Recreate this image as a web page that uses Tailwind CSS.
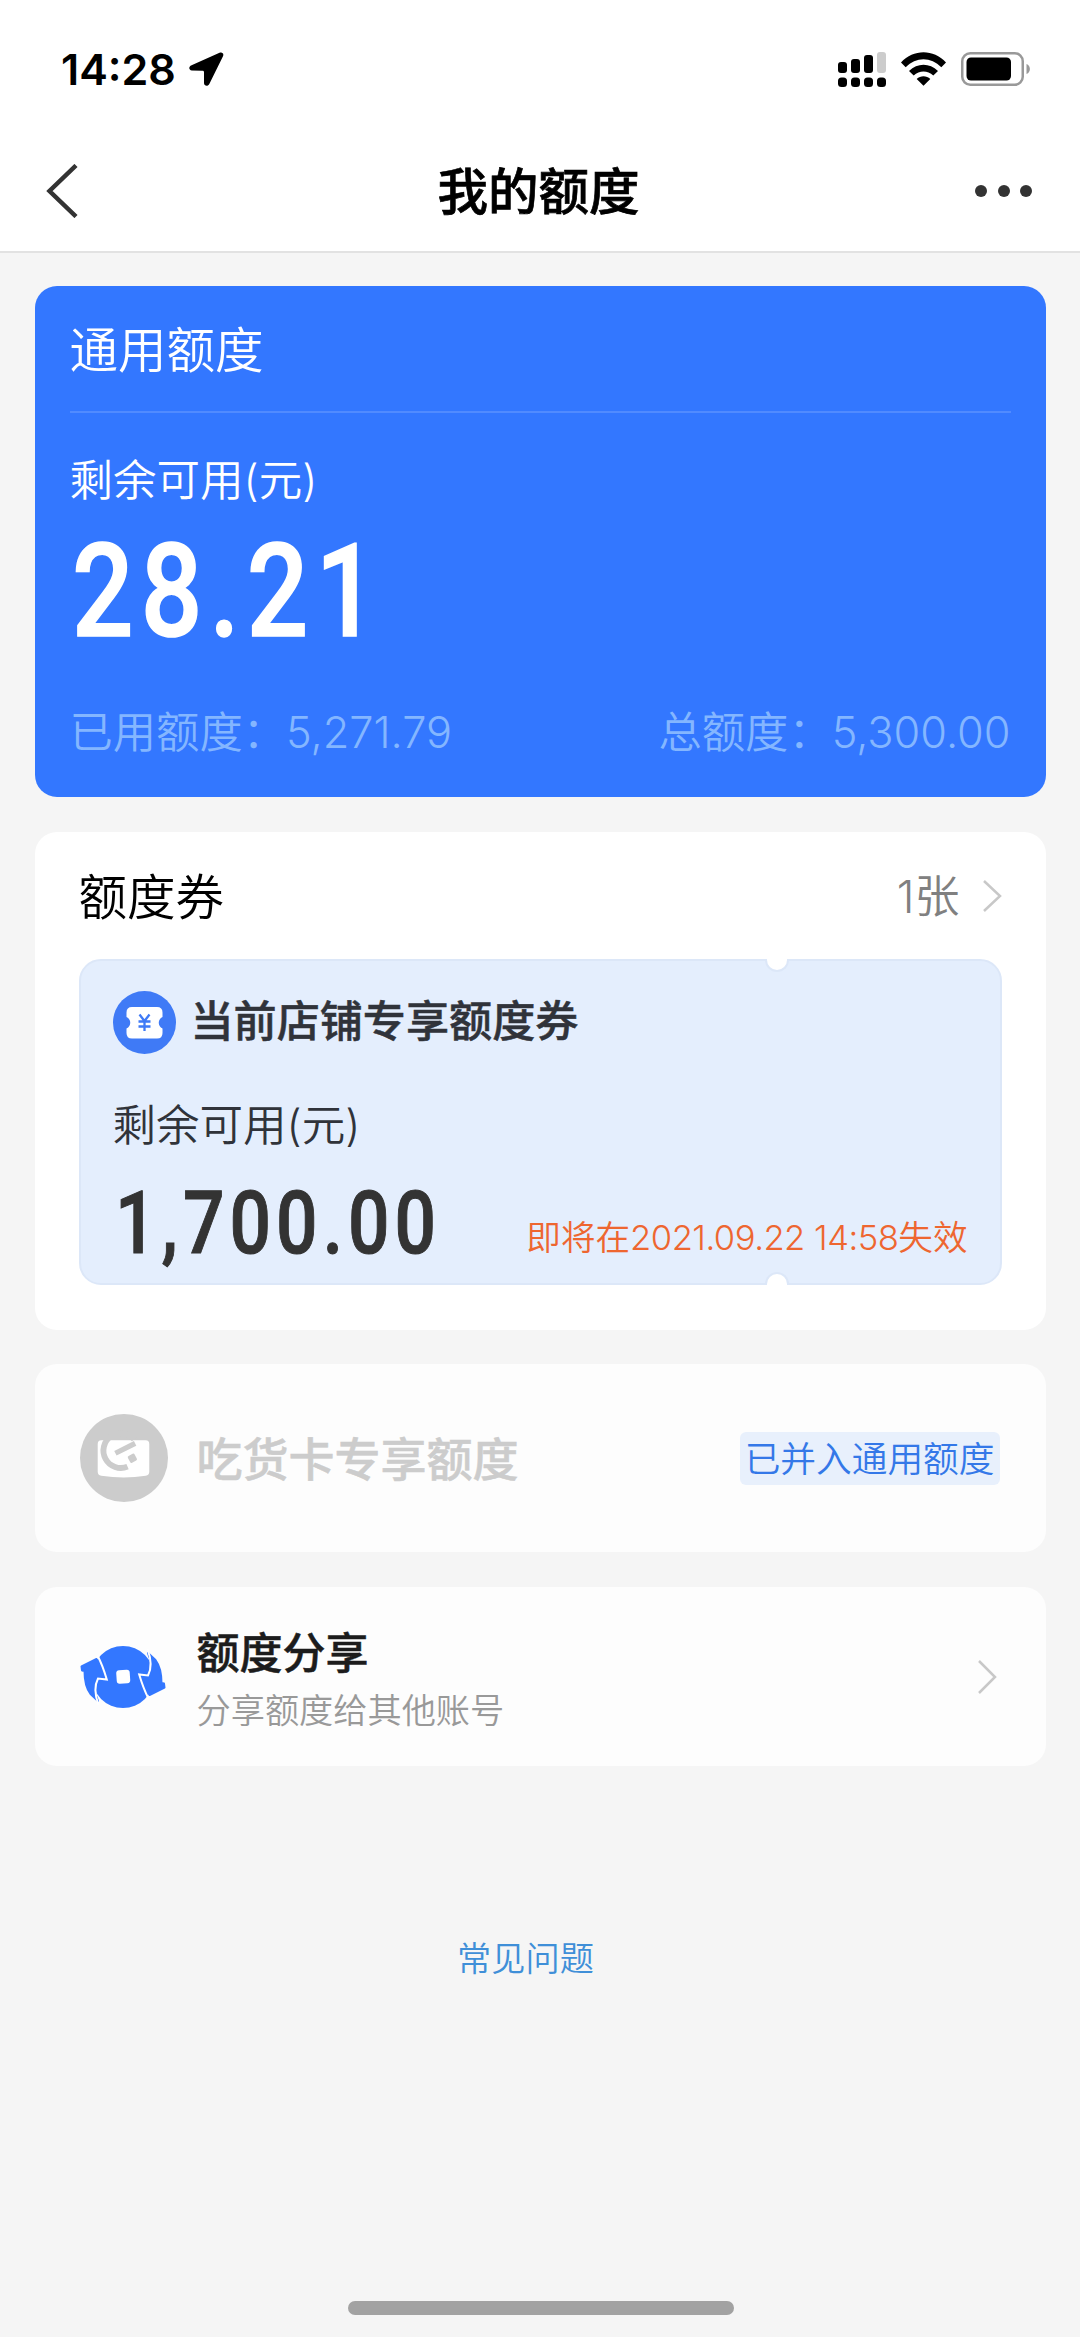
<!DOCTYPE html>
<html lang="zh-CN">
<head>
<meta charset="utf-8">
<title>我的额度</title>
<script src="https://cdn.jsdelivr.net/npm/@tailwindcss/browser@4"></script>
</head>
<body class="bg-[#f5f5f5]">
<div class="flex h-[2337px] w-[1080px] flex-col overflow-hidden bg-[#f5f5f5] font-['Inter','Noto_Sans_CJK_SC',sans-serif] font-[350] whitespace-nowrap">

  <!-- status bar and title bar -->
  <header class="h-[253px] shrink-0 border-b-2 border-[#e2e2e2] bg-white">
    <div class="flex h-[138px] items-center justify-between pr-[49px] pl-[61px]">
      <div class="flex items-center gap-[13px]">
        <span class="text-[43px] leading-[60px] font-semibold text-black">14:28</span>
        <svg class="h-[34px] w-[35px]" viewBox="0 0 35 34"><path d="M30.500 0.800 2 13.500C-.5 14.800-.3 18.300 2.800 18.500L13.500 18.700C14.500 18.700 15 19.200 15 20.200V31C15 34.200 19 34.700 20.300 32L34 4.200C35.200 1.500 33-.4 30.500.8Z" fill="#000"/></svg>
      </div>
      <div class="flex items-center gap-[15px]">
        <svg class="h-[36px] w-[48px]" viewBox="0 0 48 36">
          <g fill="#000">
            <rect x="0" y="11" width="9" height="11" rx="3"/><rect x="13" y="8" width="9" height="14" rx="3"/><rect x="26" y="4" width="9" height="18" rx="3"/>
            <rect x="0" y="26.500" width="9" height="9.500" rx="3.500"/><rect x="13" y="26.500" width="9" height="9.500" rx="3.500"/><rect x="26" y="26.500" width="9" height="9.500" rx="3.500"/><rect x="39" y="26.500" width="9" height="9.500" rx="3.500"/>
          </g>
          <rect x="39" y="1" width="9" height="21" rx="3" fill="#ccc"/>
        </svg>
        <svg class="h-[34px] w-[45px]" viewBox="0 0 45 34">
          <path d="M0 10.500C12.500-3.200 32.500-3.200 45 10.500L40.300 15.200C30 4.500 15 4.500 4.700 15.200ZM8 19C16.500 10.500 28.500 10.500 37 19L32.300 23.500C26.500 18.300 18.500 18.300 12.700 23.500ZM15.700 27C19.500 23.300 25.500 23.300 29.300 27L22.500 33.800Z" fill="#000"/>
        </svg>
        <svg class="h-[34px] w-[70px]" viewBox="0 0 70 34">
          <rect x="1.250" y="1.250" width="60.500" height="31.500" rx="8" fill="none" stroke="#999" stroke-width="2.500"/>
          <rect x="5.500" y="5.500" width="44.500" height="23" rx="4.500" fill="#000"/>
          <path d="M65.500 12V22C70 20.500 70 13.500 65.500 12Z" fill="#999"/>
        </svg>
      </div>
    </div>
    <div class="flex h-[106px] items-center justify-between pr-[48px] pl-[46px]">
      <svg class="h-[54px] w-[56px]" viewBox="0 0 56 54"><path d="M30 1.500 3.500 27 30 52.500" fill="none" stroke="#333" stroke-width="4.500"/></svg>
      <h1 class="pt-px text-[50.500px] leading-[80px] font-medium text-black [-webkit-text-stroke:0.700px_#000]">我的额度</h1>
      <div class="flex gap-[10.500px]">
        <span class="size-3 rounded-full bg-[#333]"></span><span class="size-3 rounded-full bg-[#333]"></span><span class="size-3 rounded-full bg-[#333]"></span>
      </div>
    </div>
  </header>

  <main class="flex flex-col px-[34.500px] pt-[33px]">
    <!-- general quota -->
    <section class="h-[511px] rounded-[22px] bg-[#3377ff] px-[35px] text-white">
      <h2 class="flex h-[127px] items-center border-b-2 border-white/15 pt-[6px] text-[48.500px]">通用额度</h2>
      <p class="mt-[37px] text-[43.500px] leading-[60px]">剩余可用(元)</p>
      <p class="mt-[27px] ml-[2px] h-[110px] origin-left scale-x-[.84] font-['Roboto'] text-[129px] leading-[110px] font-medium tracking-[8.500px] [-webkit-text-stroke:1.500px_#fff]">28.21</p>
      <div class="mt-[55px] flex justify-between text-[43.300px] leading-[60px] text-[#84b6ff]">
        <span>已用额度：5,271.79</span><span>总额度：5,300.00</span>
      </div>
    </section>

    <!-- quota coupons -->
    <section class="mt-[35px] h-[498px] rounded-[22px] bg-white px-[44px]">
      <div class="flex h-[127px] items-center justify-between">
        <h2 class="pt-[5px] text-[48.500px] text-black">额度券</h2>
        <div class="flex items-center gap-[22px] text-[45px] text-[#808080]"><span class="pt-[3px]">1张</span>
          <svg class="h-[34px] w-[20px]" viewBox="0 0 20 34"><path d="M2 2 18 17 2 32" fill="none" stroke="#c8c8c8" stroke-width="2.500"/></svg>
        </div>
      </div>
      <div class="relative h-[326px] rounded-[22px] border-2 border-[#dce7f8] bg-[#e4eefd] px-[32px]">
        <span class="absolute -top-[2px] left-[684px] h-[13px] w-[24px] rounded-b-full border-2 border-t-0 border-[#dce7f8] bg-white"></span>
        <span class="absolute -bottom-[2px] left-[684px] h-[13px] w-[24px] rounded-t-full border-2 border-b-0 border-[#dce7f8] bg-white"></span>
        <div class="mt-[30px] flex h-[63px] items-center gap-[15px]">
          <svg class="size-[63px]" viewBox="0 0 63 63">
            <circle cx="31.500" cy="31.500" r="31.500" fill="#3f7af6"/>
            <path d="M19 16H44Q49.500 16 49.500 21.500V26C44.500 28.500 44.500 35 49.500 37.500V42Q49.500 47.500 44 47.500H19Q13.500 47.500 13.500 42V37.500C18.500 35 18.500 28.500 13.500 26V21.500Q13.500 16 19 16Z" fill="#fff"/>
            <path d="M26.500 23.500 31.500 30 36.500 23.500M31.500 30V40M25.500 30.500H37.500M25.500 35.500H37.500" fill="none" stroke="#3f7af6" stroke-width="2.300"/>
          </svg>
          <h3 class="-mt-[4px] text-[43.100px] leading-[60px] font-medium text-[#30333a] [-webkit-text-stroke:0.500px_#30333a]">当前店铺专享额度券</h3>
        </div>
        <p class="mt-[41px] text-[43.500px] leading-[60px] text-[#30333a]">剩余可用(元)</p>
        <div class="flex items-center justify-between">
          <span class="mt-[23px] ml-[2px] w-[360px] origin-left scale-x-[.84] font-['Roboto'] text-[87px] leading-[90px] font-medium tracking-[6px] text-[#333] [-webkit-text-stroke:1px_#333]">1,700.00</span>
          <span class="mt-[50px] text-[34.600px] leading-[50px] text-[#ee6630]">即将在<span class="tracking-[-0.500px]">2021.09.22 14:58</span>失效</span>
        </div>
      </div>
    </section>

    <!-- foodie card quota -->
    <section class="mt-[34px] flex h-[188px] items-center rounded-[22px] bg-[#fdfdfd] pr-[46px] pl-[45px]">
      <svg class="size-[88px]" viewBox="0 0 87 87">
        <circle cx="43.500" cy="43.500" r="43.500" fill="#ccc"/>
        <path d="M21 26H65Q68.500 26 68.500 30V57Q68.500 60.500 65 61Q43.500 64.500 21 61Q17.500 60.500 17.500 57V30Q17.500 26 21 26Z" fill="#fff"/>
        <path d="M53.500 25A17.200 17.200 0 1 0 47 52" fill="none" stroke="#ccc" stroke-width="5.800"/>
        <path d="M35 38.800 54.500 29" stroke="#ccc" stroke-width="5.200"/>
        <rect x="48" y="40" width="7.500" height="7.500" rx="1.500" fill="#ccc" transform="rotate(-28 51.700 43.700)"/>
      </svg>
      <h3 class="ml-[29px] grow text-[46px] font-medium text-[#ccc] [-webkit-text-stroke:0.500px_#ccc]"><span class="relative top-px">吃货卡专享额度</span></h3>
      <span class="rounded-[6px] bg-[#e8f0fc] px-[5px] text-[35.700px] leading-[53px] text-[#3478e8]"><span class="relative top-px">已并入通用额度</span></span>
    </section>

    <!-- quota sharing -->
    <section class="mt-[35px] flex h-[179px] items-center rounded-[22px] bg-[#fdfdfd] pr-[49px] pl-[45px]">
      <svg class="h-[64px] w-[87px]" viewBox="0 0 87 64">
        <circle cx="43" cy="32" r="31" fill="#3377ff"/>
        <g id="arrow">
          <path d="M1.500 21.500 16.500 14 25.500 33.700 17 33Q12.500 44 18 56L10.500 49Q4.500 41 4.500 26L2 25.500Z" fill="#3377ff" stroke="#3377ff" stroke-width="2" stroke-linejoin="round"/>
          <path d="M17.500 10.500Q22.500 20 26.800 34.500L18 33.500Q12.500 44 18.500 60" fill="none" stroke="#fff" stroke-width="2"/>
        </g>
        <use href="#arrow" transform="rotate(180 43 32)"/>
        <rect x="36.500" y="25" width="13.500" height="13.500" rx="3" fill="#fff" transform="rotate(-4 43.500 32)"/>
      </svg>
      <div class="ml-[30px] grow pt-[7px]">
        <h3 class="text-[43px] leading-[62px] font-medium text-[#1c1c1c] [-webkit-text-stroke:0.500px_#1c1c1c]">额度分享</h3>
        <p class="text-[34.200px] leading-[54px] text-[#999]">分享额度给其他账号</p>
      </div>
      <svg class="h-[36px] w-[20px]" viewBox="0 0 20 36"><path d="M2 2 18 18 2 34" fill="none" stroke="#c8c8c8" stroke-width="2.500"/></svg>
    </section>
  </main>

  <a class="mt-[167px] -ml-[29px] text-center text-[34.200px] leading-[52px] text-[#3f8fd8]">常见问题</a>
  <div class="mt-auto mb-[22px] ml-px h-[14px] w-[386px] shrink-0 self-center rounded-full bg-[#a2a2a2]"></div>
</div>
</body>
</html>
